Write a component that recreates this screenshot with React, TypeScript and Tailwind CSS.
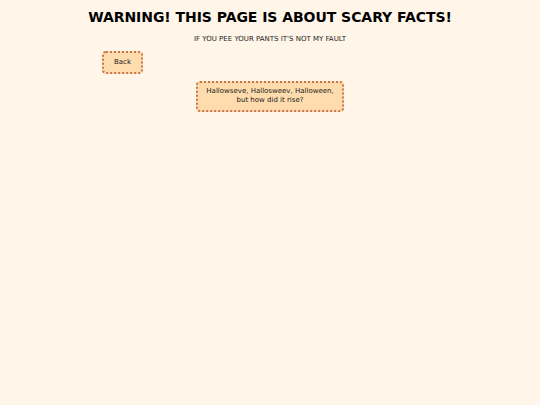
export default function App() {
  return (
    <div className="min-h-[405px] w-full bg-[#fff5e8] text-black" style={{ fontFamily: '"DejaVu Sans", Verdana, sans-serif' }}>
      <div className="flex flex-col items-center pt-[8px]">
        <h1 className="text-[14px] leading-[18px] font-bold tracking-[-0.05px]">WARNING! THIS PAGE IS ABOUT SCARY FACTS!</h1>
        <p className="mt-[9px] text-[7px] leading-[9px] text-[#1a1a1a]">IF YOU PEE YOUR PANTS IT'S NOT MY FAULT</p>
      </div>
      <div className="pl-[102px] mt-[3px]">
        <button className="w-[41px] h-[23px] rounded-[4px] border-2 border-dotted border-[#c9774f] bg-[#ffdcad] text-[7px] text-[#1a1a1a]">Back</button>
      </div>
      <div className="flex justify-center mt-[7px]">
        <div className="w-[148px] h-[31px] rounded-[4px] border-2 border-dotted border-[#c9774f] bg-[#ffdcad] text-[7px] leading-[9px] text-[#1a1a1a] flex flex-col items-center justify-center text-center">
          <span>Hallowseve, Hallosweev, Halloween,</span>
          <span>but how did it rise?</span>
        </div>
      </div>
    </div>
  );
}
